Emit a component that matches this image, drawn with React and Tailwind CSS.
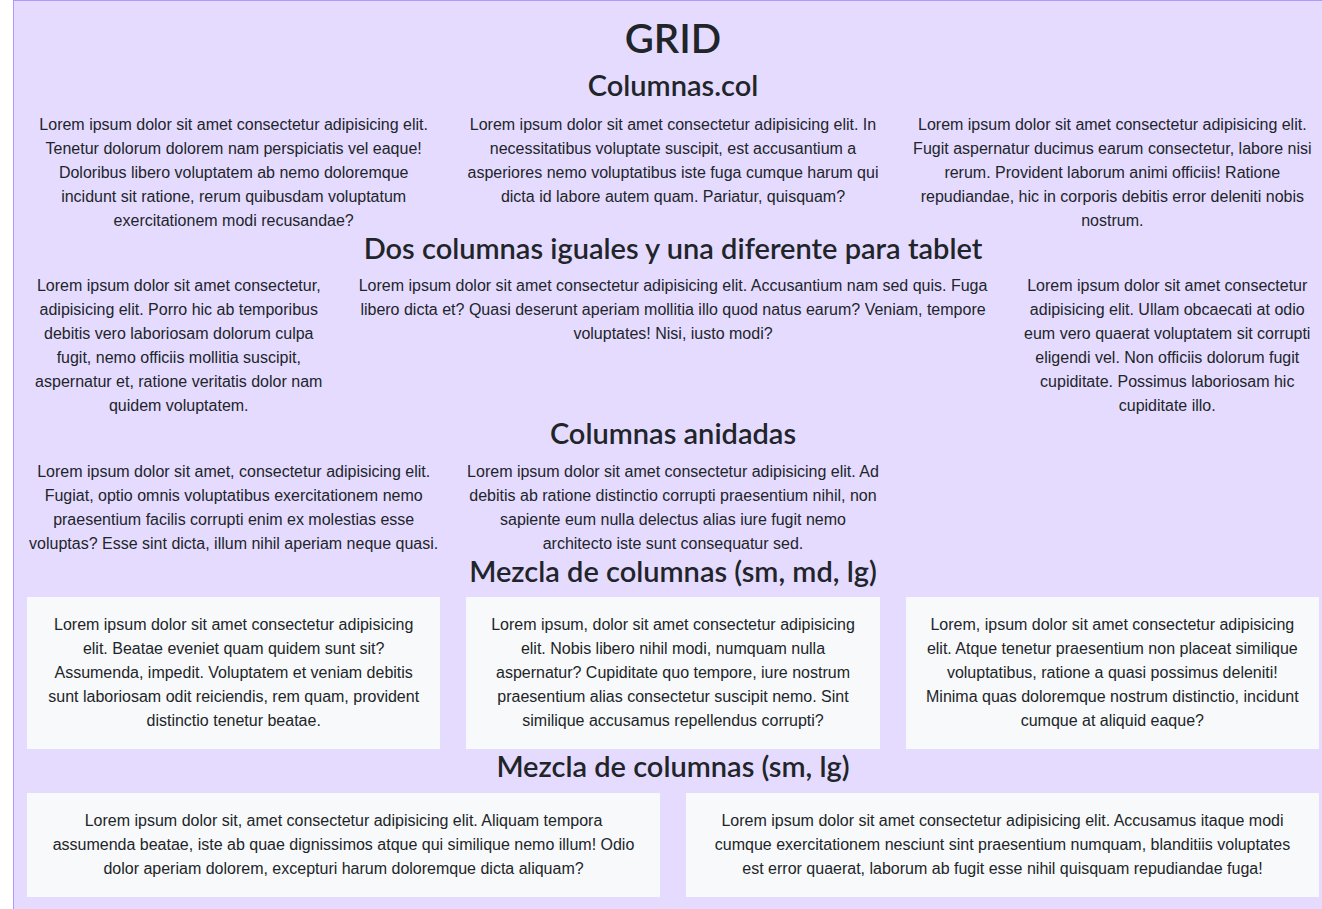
export default function App() {
    const h3 = "font-['Lato',sans-serif] text-[29px] leading-[29.6px] pb-1 mb-2 font-semibold";

    return (
        <div className="w-[1322px] h-[909px] overflow-hidden bg-white font-['Liberation_Sans',Arial,sans-serif] text-[16px] leading-6 text-[#212529]">
            <div className="ml-[13px] w-[1320px] border border-[#b197fc] bg-[#e5dbff] text-center pt-[13px] pb-4">
                <h1 className="font-['Lato',sans-serif] text-[40px] leading-[48px] mb-2 font-semibold">GRID</h1>

                <h2 className={h3}>Columnas.col</h2>
                <div className="flex pt-px">
                    <p className="w-1/3 px-4">
                        Lorem ipsum dolor sit amet consectetur adipisicing elit. Tenetur dolorum dolorem nam perspiciatis vel eaque! Doloribus libero voluptatem ab nemo doloremque incidunt sit ratione, rerum quibusdam voluptatum exercitationem modi recusandae?
                    </p>
                    <p className="w-1/3 px-3">
                        Lorem ipsum dolor sit amet consectetur adipisicing elit. In necessitatibus voluptate suscipit, est accusantium a asperiores nemo voluptatibus iste fuga cumque harum qui dicta id labore autem quam. Pariatur, quisquam?
                    </p>
                    <p className="w-1/3 px-3">
                        Lorem ipsum dolor sit amet consectetur adipisicing elit. Fugit aspernatur ducimus earum consectetur, labore nisi rerum. Provident laborum animi officiis! Ratione repudiandae, hic in corporis debitis error deleniti nobis nostrum.
                    </p>
                </div>

                <h3 className={h3}>Dos columnas iguales y una diferente para tablet</h3>
                <div className="flex">
                    <p className="w-1/4 px-3">
                        Lorem ipsum dolor sit amet consectetur, adipisicing elit. Porro hic ab temporibus debitis vero laboriosam dolorum culpa fugit, nemo officiis mollitia suscipit, aspernatur et, ratione veritatis dolor nam quidem voluptatem.
                    </p>
                    <p className="w-1/2 px-3">
                        Lorem ipsum dolor sit amet consectetur adipisicing elit. Accusantium nam sed quis. Fuga libero dicta et? Quasi deserunt aperiam mollitia illo quod natus earum? Veniam, tempore voluptates! Nisi, iusto modi?
                    </p>
                    <p className="w-1/4 px-3">
                        Lorem ipsum dolor sit amet consectetur adipisicing elit. Ullam obcaecati at odio eum vero quaerat voluptatem sit corrupti eligendi vel. Non officiis dolorum fugit cupiditate. Possimus laboriosam hic cupiditate illo.
                    </p>
                </div>

                <h3 className={h3}>Columnas anidadas</h3>
                <div className="flex">
                    <div className="w-2/3 flex">
                        <p className="w-1/2 px-3">
                            Lorem ipsum dolor sit amet, consectetur adipisicing elit. Fugiat, optio omnis voluptatibus exercitationem nemo praesentium facilis corrupti enim ex molestias esse voluptas? Esse sint dicta, illum nihil aperiam neque quasi.
                        </p>
                        <p className="w-1/2 px-3">
                            Lorem ipsum dolor sit amet consectetur adipisicing elit. Ad debitis ab ratione distinctio corrupti praesentium nihil, non sapiente eum nulla delectus alias iure fugit nemo architecto iste sunt consequatur sed.
                        </p>
                    </div>
                </div>

                <h3 className={h3}>Mezcla de columnas (sm, md, lg)</h3>
                <div className="flex">
                    <div className="w-1/3 px-[13px]">
                        <p className="bg-[#f8f9fa] p-4">
                            Lorem ipsum dolor sit amet consectetur adipisicing elit. Beatae eveniet quam quidem sunt sit? Assumenda, impedit. Voluptatem et veniam debitis sunt laboriosam odit reiciendis, rem quam, provident distinctio tenetur beatae.
                        </p>
                    </div>
                    <div className="w-1/3 px-[13px]">
                        <p className="bg-[#f8f9fa] p-4">
                            Lorem ipsum, dolor sit amet consectetur adipisicing elit. Nobis libero nihil modi, numquam nulla aspernatur? Cupiditate quo tempore, iure nostrum praesentium alias consectetur suscipit nemo. Sint similique accusamus repellendus corrupti?
                        </p>
                    </div>
                    <div className="w-1/3 px-[13px]">
                        <p className="bg-[#f8f9fa] p-4">
                            Lorem, ipsum dolor sit amet consectetur adipisicing elit. Atque tenetur praesentium non placeat similique voluptatibus, ratione a quasi possimus deleniti! Minima quas doloremque nostrum distinctio, incidunt cumque at aliquid eaque?
                        </p>
                    </div>
                </div>

                <h3 className={h3 + " mt-[2px]"}>Mezcla de columnas (sm, lg)</h3>
                <div className="flex">
                    <div className="w-1/2 px-[13px]">
                        <p className="bg-[#f8f9fa] p-4">
                            Lorem ipsum dolor sit, amet consectetur adipisicing elit. Aliquam tempora assumenda beatae, iste ab quae dignissimos atque qui similique nemo illum! Odio dolor aperiam dolorem, excepturi harum doloremque dicta aliquam?
                        </p>
                    </div>
                    <div className="w-1/2 px-[13px]">
                        <p className="bg-[#f8f9fa] p-4">
                            Lorem ipsum dolor sit amet consectetur adipisicing elit. Accusamus itaque modi cumque exercitationem nesciunt sint praesentium numquam, blanditiis voluptates est error quaerat, laborum ab fugit esse nihil quisquam repudiandae fuga!
                        </p>
                    </div>
                </div>
            </div>
        </div>
    );
}
